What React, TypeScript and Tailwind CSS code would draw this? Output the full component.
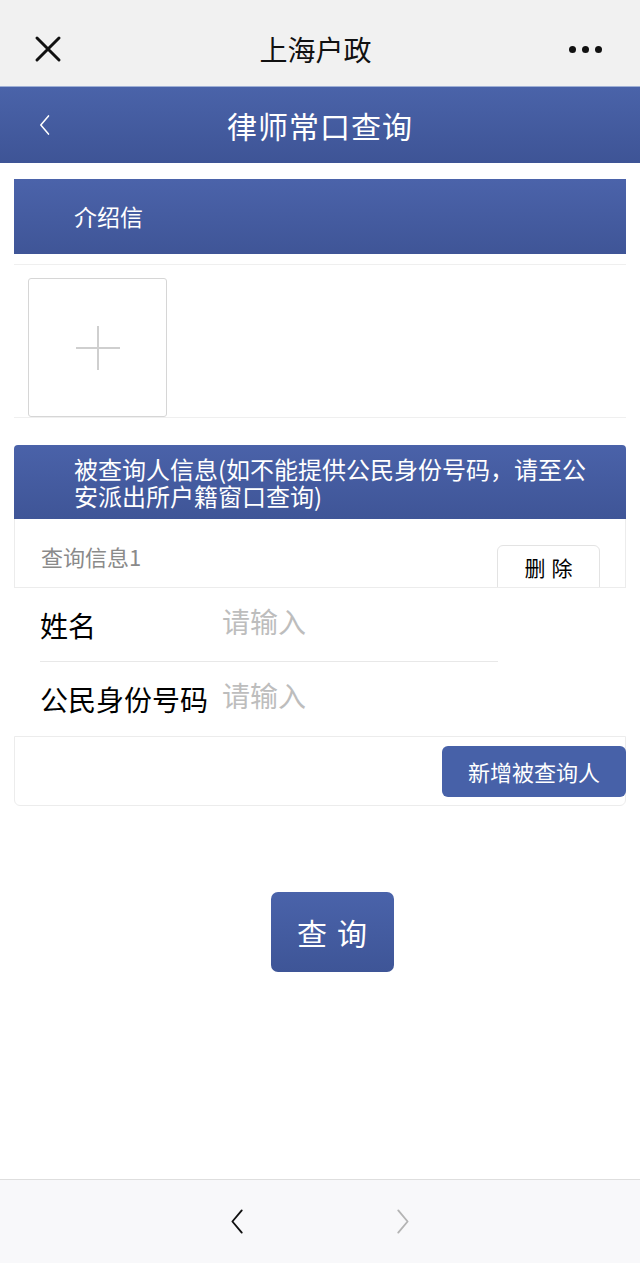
const cjk = { fontFamily: '"Noto Sans CJK SC", "Noto Sans", sans-serif' };

const Chevron = ({ dir, className }: { dir: "left" | "right"; className?: string }) => (
  <svg viewBox="0 0 20 32" className={className} fill="none" stroke="currentColor" strokeWidth="2.2" strokeLinecap="round" strokeLinejoin="round">
    {dir === "left" ? <path d="M15 3 L4 16 L15 29" /> : <path d="M5 3 L16 16 L5 29" />}
  </svg>
);

const Field = ({ label, line }: { label: string; line?: boolean }) => (
  <div className="flex items-center h-[74px] mx-10 relative">
    <span className="w-[182px] text-[28px] text-black leading-none">{label}</span>
    <span className="text-[28px] text-[#bdbdbd] leading-none -mt-2">请输入</span>
    {line && <div className="absolute bottom-0 left-0 w-[458px] h-px bg-[#e8e8e8]" />}
  </div>
);

export default function App() {
  return (
    <div className="w-[640px] h-[1263px] bg-white flex flex-col" style={cjk}>
      {/* wechat bar */}
      <header className="h-[86px] bg-[#f1f1f1] flex items-center justify-between px-[34px] pt-3 shrink-0">
        <svg viewBox="0 0 28 28" className="w-7 h-7" stroke="#111" strokeWidth="3" strokeLinecap="round">
          <path d="M3 3 L25 25 M25 3 L3 25" />
        </svg>
        <h1 className="text-[28px] text-[#111] font-normal">上海户政</h1>
        <div className="flex gap-[6px] pr-1">
          <span className="w-[7px] h-[7px] rounded-full bg-[#111]" />
          <span className="w-[7px] h-[7px] rounded-full bg-[#111]" />
          <span className="w-[7px] h-[7px] rounded-full bg-[#111]" />
        </div>
      </header>

      {/* page title */}
      <div className="h-[77px] bg-gradient-to-b from-[#4a63a9] to-[#3e5496] flex items-center relative shrink-0 border-t border-[#9fb0d6]">
        <Chevron dir="left" className="absolute left-[38px] w-[14px] h-[24px] text-white" />
        <h2 className="w-full text-center text-[30px] text-white tracking-[1px]">律师常口查询</h2>
      </div>

      {/* 介绍信 */}
      <div className="mx-[14px] mt-4 h-[75px] bg-gradient-to-b from-[#4b63aa] to-[#3f5597] flex items-center pl-[60px] shrink-0">
        <span className="text-[23px] text-white">介绍信</span>
      </div>
      <div className="mx-[14px] mt-[10px] border-t border-b border-[#efefef] h-[154px] flex items-end pl-[14px] shrink-0">
        <div className="w-[139px] h-[139px] border border-[#d6d6d6] rounded-[3px] flex items-center justify-center">
          <svg viewBox="0 0 44 44" className="w-11 h-11" stroke="#cfcfcf" strokeWidth="2">
            <path d="M22 0 V44 M0 22 H44" />
          </svg>
        </div>
      </div>

      {/* 被查询人信息 */}
      <div className="mx-[14px] mt-[27px] h-[74px] bg-gradient-to-b from-[#4a62a9] to-[#3f5597] rounded-t-[4px] flex items-center pl-[60px] shrink-0">
        <p className="w-[518px] text-[24px] text-white leading-[27px]">被查询人信息(如不能提供公民身份号码，请至公安派出所户籍窗口查询)</p>
      </div>
      <div className="mx-[14px] h-[69px] border-x border-b border-[#ececec] flex items-start justify-between pl-[26px] pr-[25px] overflow-hidden shrink-0">
        <span className="text-[22px] text-[#8a8a8a] mt-[21px]">查询信息1</span>
        <button className="mt-[26px] w-[103px] h-[50px] border border-[#e3e3e3] rounded-[6px] bg-white text-[21px] text-black tracking-[6px] pl-[6px] pb-1">
          删除
        </button>
      </div>

      <Field label="姓名" line />
      <Field label="公民身份号码" />

      <div className="mx-[14px] h-[70px] border border-[#ececec] rounded-b-[6px] flex items-center justify-end shrink-0">
        <button className="h-[51px] w-[184px] -mr-px rounded-[6px] bg-[#4761a8] text-white text-[22px]">新增被查询人</button>
      </div>

      <div className="flex justify-center mt-[86px] pl-[24px]">
        <button className="w-[123px] h-[80px] rounded-[7px] bg-gradient-to-b from-[#4a63aa] to-[#3e5597] text-white text-[30px] tracking-[10px] pl-[10px]">
          查询
        </button>
      </div>

      <div className="flex-1" />

      {/* bottom nav */}
      <footer className="h-[84px] bg-[#f8f8fa] border-t border-[#dedede] flex items-center justify-center gap-[148px] shrink-0">
        <Chevron dir="left" className="w-[17px] h-[29px] text-[#111]" />
        <Chevron dir="right" className="w-[17px] h-[29px] text-[#b4b4b4]" />
      </footer>
    </div>
  );
}
